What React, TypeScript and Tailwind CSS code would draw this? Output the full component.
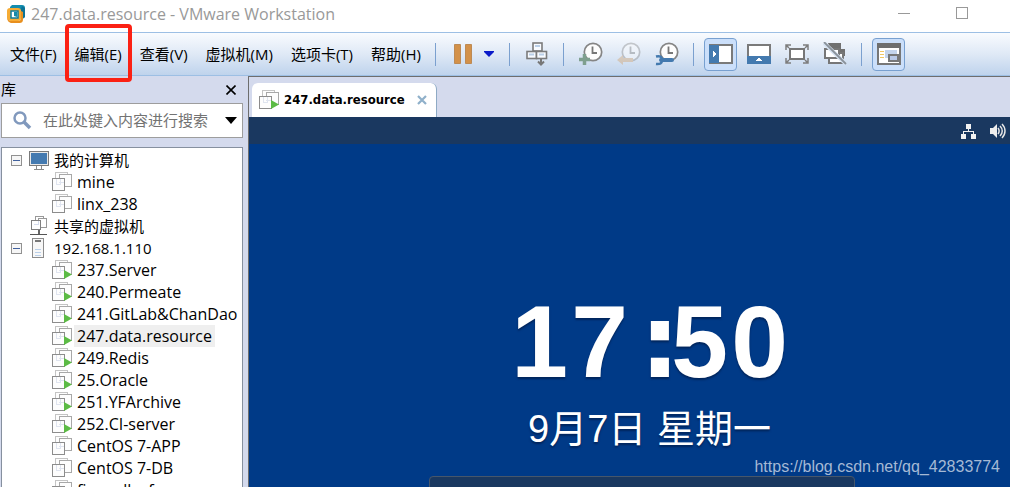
import type { ReactNode } from "react";

const uiFont = "font-['Open_Sans','Noto_Sans_CJK_SC',sans-serif]";

function VmIcon({ running = false }: { running?: boolean }) {
  return (
    <svg width="20" height="20" viewBox="0 0 20 20" shapeRendering="crispEdges" aria-hidden="true" className="shrink-0">
      <rect x="3.5" y="0.5" width="12" height="12" fill="#fdfdfd" stroke="#c4c4c4" />
      <rect x="7.5" y="2.5" width="12" height="12" fill="#fdfdfd" stroke="#a8a8a8" />
      <rect x="0.5" y="6.5" width="12" height="12" fill="#fdfdfd" stroke="#8c8c8c" />
      <path d="M4.5 7v5h4M8.5 7v5M7 10.500h5" fill="none" stroke="#dfe4ef" />
      {running && <path d="M12 10v9l8-4.5z" fill="#5cbb45" shapeRendering="auto" />}
    </svg>
  );
}

function ComputerIcon() {
  return (
    <svg width="20" height="20" viewBox="0 0 20 20" shapeRendering="crispEdges" aria-hidden="true">
      <rect x="0.5" y="1.5" width="19" height="14" fill="#e8e8e8" stroke="#7b7b7b" />
      <rect x="2" y="3" width="16" height="11" fill="#447ab0" />
      <path d="M7.5 16v3M12.5 16v3M5 19.5h10" stroke="#8a8a8a" fill="none" />
    </svg>
  );
}

function SharedIcon() {
  return (
    <svg width="20" height="20" viewBox="0 0 20 20" shapeRendering="crispEdges" aria-hidden="true">
      <rect x="6.5" y="0.5" width="8" height="8" fill="#fff" stroke="#999" />
      <rect x="9.5" y="2.5" width="8" height="9" fill="#fff" stroke="#999" />
      <rect x="2.5" y="4.5" width="9" height="9" fill="#fff" stroke="#808080" />
      <path d="M5 8.5h4V5" stroke="#d5dced" fill="none" />
      <path d="M10 14v4" stroke="#666" fill="none" strokeWidth="2" />
      <path d="M1 18.500h17" stroke="#555" fill="none" />
    </svg>
  );
}

function ServerIcon() {
  return (
    <svg width="20" height="20" viewBox="0 0 20 20" shapeRendering="crispEdges" aria-hidden="true">
      <rect x="3.5" y="0.5" width="11" height="19" fill="#f7f7f7" stroke="#8b8b8b" />
      <path d="M6 3h6" stroke="#777" strokeWidth="2" />
      <path d="M6 11.5h6M6 14.5h6M6 17.5h6" stroke="#b9cfe9" />
    </svg>
  );
}

function LogoIcon() {
  return (
    <svg width="20" height="20" viewBox="0 0 20 20" aria-hidden="true">
      <path d="M6 1h10a3 3 0 013 3v9l-4 3V6H4V3z" fill="#138daf" />
      <path d="M16 2l3 2v9l-4 3V5z" fill="#0d7396" />
      <path d="M4 4h8a3 3 0 013 3v7a3 3 0 01-3 3H5a4 4 0 01-4-4V7a3 3 0 013-3z" fill="#f6ac35" />
      <path d="M1 12c0 5 2 7 5 7h7c3 0 4-1 4-4V8l-2-1v7a3 3 0 01-3 3H5c-2 0-4-2-4-5z" fill="#e88f1e" />
      <rect x="5" y="7" width="7" height="7" fill="#fff" stroke="#0c7c9e" strokeWidth="1.500" />
      <path d="M8 8h3v5l-3-1z" fill="#1589a8" />
    </svg>
  );
}

function ClockFace({ faded = false, children }: { faded?: boolean; children: ReactNode }) {
  return (
    <svg width="24" height="24" viewBox="0 0 24 24" aria-hidden="true" opacity={faded ? 0.4 : 1}>
      <circle cx="14" cy="10" r="8.700" fill="#fdfdfd" stroke="#858585" strokeWidth="1.700" />
      <path d="M13.500 4.500v6.500h4.500" fill="none" stroke="#777" strokeWidth="1.800" />
      {children}
    </svg>
  );
}

function SendIcon() {
  return (
    <svg width="22" height="24" viewBox="0 0 22 24" aria-hidden="true">
      <g fill="#f8fbff" stroke="#7b7b7b" strokeWidth="1.600">
        <rect x="7" y="1" width="9" height="8" />
        <rect x="1" y="9.500" width="9.500" height="7" />
        <rect x="10.500" y="9.500" width="10" height="7" />
      </g>
      <path d="M9 4h5M3 12.500h5M13 12.500h5" stroke="#b9cfe8" strokeWidth="2" />
      <path d="M15 17v5M12 19.500l3 3 3-3" fill="none" stroke="#777" strokeWidth="2" />
    </svg>
  );
}

function SidebarViewIcon() {
  return (
    <svg width="24" height="20" viewBox="0 0 24 20" shapeRendering="crispEdges" aria-hidden="true">
      <rect x="1" y="1" width="22" height="18" fill="#fff" stroke="#7a7a7a" strokeWidth="2" />
      <rect x="0" y="1" width="10" height="18" fill="#447aaf" />
      <path d="M4 6v8l3-4z" fill="#fff" />
    </svg>
  );
}

function ThumbnailViewIcon() {
  return (
    <svg width="24" height="20" viewBox="0 0 24 20" shapeRendering="crispEdges" aria-hidden="true">
      <rect x="1" y="1" width="22" height="18" fill="#fff" stroke="#7a7a7a" strokeWidth="2" />
      <rect x="0" y="12" width="24" height="8" fill="#447aaf" />
      <path d="M8 17h8l-4-3z" fill="#fff" />
    </svg>
  );
}

function FullScreenIcon() {
  return (
    <svg width="24" height="20" viewBox="0 0 24 20" aria-hidden="true">
      <rect x="5" y="5" width="14" height="10" fill="#fff" stroke="#777" strokeWidth="2" />
      <path d="M1 6V1h5M18 1h5v5M23 14v5h-5M6 19H1v-5M1 1l3 3M23 1l-3 3M23 19l-3-3M1 19l3-3" fill="none" stroke="#7d7d7d" strokeWidth="1.500" />
    </svg>
  );
}

function UnityIcon() {
  return (
    <svg width="24" height="24" viewBox="0 0 24 24" aria-hidden="true">
      <path d="M5 1h13v6h4v7H9z" fill="#707070" />
      <rect x="6" y="11" width="14" height="10" fill="#fff" stroke="#777" strokeWidth="2" />
      <rect x="2" y="7" width="14" height="9" fill="#fff" stroke="#777" strokeWidth="2" />
      <path d="M1 1l22 21" stroke="#d6e2f2" strokeWidth="4" />
      <path d="M1 0l22 22" stroke="#8a929a" strokeWidth="1.800" />
    </svg>
  );
}

function ConsoleIcon() {
  return (
    <svg width="24" height="22" viewBox="0 0 24 22" shapeRendering="crispEdges" aria-hidden="true">
      <rect x="1" y="1" width="22" height="20" fill="#fff" stroke="#777" strokeWidth="2" />
      <path d="M0 0h24v5H0z" fill="#6e6e6e" />
      <path d="M3 8.500h4M3 11.500h4M3 14.500h4" stroke="#f1c765" />
      <rect x="8" y="7" width="12" height="8" fill="#c4d4ec" />
      <rect x="12" y="12" width="9" height="6" fill="#b9c9e7" stroke="#777" strokeWidth="2" />
    </svg>
  );
}

function ToolButton({ label, active = false, children }: { label: string; active?: boolean; children: ReactNode }) {
  const look = active ? "border-[#78a0d0] bg-[#cbdffa]" : "border-transparent";
  return (
    <button type="button" aria-label={label} className={`flex h-[33px] w-[33px] shrink-0 items-center justify-center rounded border ${look}`}>
      {children}
    </button>
  );
}

function ToolGroup({ children }: { children: ReactNode }) {
  return <div className="flex h-[23px] shrink-0 items-center gap-[5px] border-l border-[#7ba0cf] px-[10px]">{children}</div>;
}

const menus = ["文件(F)", "编辑(E)", "查看(V)", "虚拟机(M)", "选项卡(T)", "帮助(H)"];

function Menu() {
  return (
    <nav className="flex w-[435px] shrink-0 pl-px">
      {menus.map((name) => (
        <button key={name} type="button" className="relative shrink-0 px-[9px] text-[15px] leading-6 text-black">
          {name}
          {name === "编辑(E)" && <span className="absolute -inset-x-px -top-[18px] -bottom-[16px] rounded border-4 border-[#fb2114]" />}
        </button>
      ))}
    </nav>
  );
}

function Toolbar() {
  return (
    <div className="flex h-[44px] shrink-0 items-center border-y border-[#9dbfe4] bg-linear-to-b from-[#f9fbfe] via-[#dfe9f6] to-[#bfd3ec]">
      <Menu />
      <div className="flex items-center">
        <div className="flex h-[23px] shrink-0 items-center border-l border-[#7ba0cf] px-[10px]">
          <ToolButton label="挂起">
            <svg width="18" height="20" viewBox="0 0 18 20" aria-hidden="true">
              <path d="M.5.5h6v19h-6zM11.500.5h6v19h-6z" fill="#d39149" stroke="#bd8a54" />
            </svg>
          </ToolButton>
          <button type="button" aria-label="电源选项" className="flex h-[33px] w-5 items-center justify-center">
            <svg width="10" height="6" viewBox="0 0 10 6" aria-hidden="true">
              <path d="M0 0h10v1L5 6 0 1z" fill="#0b1bc9" />
            </svg>
          </button>
        </div>
        <ToolGroup>
          <ToolButton label="发送"><SendIcon /></ToolButton>
        </ToolGroup>
        <ToolGroup>
          <ToolButton label="拍摄快照">
            <ClockFace><path d="M5.500 12v11M0 17.500h11" stroke="#7fa08f" strokeWidth="3.500" /></ClockFace>
          </ToolButton>
          <ToolButton label="恢复快照">
            <ClockFace faded><path d="M0 18l6-5v3h10v4H6v3z" fill="#d2a069" /></ClockFace>
          </ToolButton>
          <ToolButton label="管理快照">
            <ClockFace>
              <path d="M6 18h11" stroke="#447aaf" strokeWidth="4" strokeLinecap="round" />
              <path d="M1 14.500c4-1 6 0 6 3.500s-2 4.500-6 4" fill="none" stroke="#447aaf" strokeWidth="2.500" />
            </ClockFace>
          </ToolButton>
        </ToolGroup>
        <ToolGroup>
          <ToolButton label="显示库" active><SidebarViewIcon /></ToolButton>
          <ToolButton label="显示缩略图"><ThumbnailViewIcon /></ToolButton>
          <ToolButton label="全屏"><FullScreenIcon /></ToolButton>
          <ToolButton label="Unity"><UnityIcon /></ToolButton>
        </ToolGroup>
        <ToolGroup>
          <ToolButton label="控制台视图" active><ConsoleIcon /></ToolButton>
        </ToolGroup>
      </div>
    </div>
  );
}

type Machine = { name: string; running?: boolean; selected?: boolean };

const localMachines: Machine[] = [{ name: "mine" }, { name: "linx_238" }];

const serverMachines: Machine[] = [
  { name: "237.Server", running: true },
  { name: "240.Permeate", running: true },
  { name: "241.GitLab&ChanDao", running: true },
  { name: "247.data.resource", running: true, selected: true },
  { name: "249.Redis", running: true },
  { name: "25.Oracle", running: true },
  { name: "251.YFArchive", running: true },
  { name: "252.CI-server", running: true },
  { name: "CentOS 7-APP" },
  { name: "CentOS 7-DB" },
  { name: "firewall_ufw" },
];

function MachineList({ machines }: { machines: Machine[] }) {
  return (
    <ul className="text-base leading-[22px]">
      {machines.map((m) => (
        <li key={m.name} className="flex h-[22px] items-center gap-0.5 pl-[50px]">
          <VmIcon running={m.running} />
          <span className={m.selected ? "bg-[#efefef] px-[3px]" : "px-[3px]"}>{m.name}</span>
        </li>
      ))}
    </ul>
  );
}

function BranchRow({ icon, label, toggle = true }: { icon: ReactNode; label: string; toggle?: boolean }) {
  return (
    <div className="flex h-[22px] items-center pl-[9px]">
      <span className="flex w-[18px] shrink-0">
        {toggle && (
          <button type="button" aria-label={`折叠 ${label}`} className="flex h-[11px] w-[11px] items-center justify-center border border-[#919191] bg-[#f6f6f6]">
            <span className="h-px w-[7px] bg-[#41619e]" />
          </button>
        )}
      </span>
      {icon}
      <span className="pl-[5px]">{label}</span>
    </div>
  );
}

function Library() {
  return (
    <aside className="flex w-[248px] shrink-0 flex-col pr-[5px] pl-px">
      <div className="flex h-[27px] shrink-0 items-center justify-between pr-[7px] text-[15px]">
        <h2>库</h2>
        <button type="button" aria-label="关闭库">
          <svg width="10" height="10" viewBox="0 0 10 10" aria-hidden="true">
            <path d="M.5.5l9 9M9.500.5l-9 9" stroke="#000" strokeWidth="1.600" />
          </svg>
        </button>
      </div>
      <div className="flex h-[35px] shrink-0 items-center border border-[#9d9d9d] bg-white pr-[5px] pl-[11px]">
        <svg width="19" height="19" viewBox="0 0 19 19" aria-hidden="true" className="shrink-0">
          <circle cx="7" cy="7" r="5.500" fill="none" stroke="#8199bd" strokeWidth="2.500" />
          <path d="M11 11l6 6" stroke="#8199bd" strokeWidth="3.500" />
        </svg>
        <input aria-label="搜索" placeholder="在此处键入内容进行搜索" className="ml-[11px] w-full min-w-0 bg-transparent text-[15px] text-black outline-none placeholder:text-[#737373]" />
        <button type="button" aria-label="搜索选项" className="shrink-0">
          <svg width="12" height="7" viewBox="0 0 12 7" aria-hidden="true">
            <path d="M0 0h12L6 7z" fill="#000" />
          </svg>
        </button>
      </div>
      <div className="mt-[9px] min-h-0 grow overflow-hidden border border-b-0 border-[#86909f] bg-white pt-px text-[15px] leading-[22px] whitespace-nowrap text-black">
        <BranchRow icon={<ComputerIcon />} label="我的计算机" />
        <MachineList machines={localMachines} />
        <BranchRow icon={<SharedIcon />} label="共享的虚拟机" toggle={false} />
        <BranchRow icon={<ServerIcon />} label="192.168.1.110" />
        <MachineList machines={serverMachines} />
      </div>
    </aside>
  );
}

function GuestScreen() {
  return (
    <div className="relative flex min-h-0 grow flex-col overflow-hidden bg-[#003a87]">
      <div className="flex h-[27px] shrink-0 items-center justify-end gap-3 bg-[#1a3860] pr-1">
        <svg width="16" height="16" viewBox="0 0 16 16" shapeRendering="crispEdges" aria-hidden="true">
          <path d="M5 1h5v5H5zM0 11h5v5H0zM10 11h5v5h-5z" fill="#f2f2f2" />
          <path d="M7.500 6v3M2.500 11V8.500h10V11" fill="none" stroke="#f2f2f2" />
        </svg>
        <svg width="17" height="16" viewBox="0 0 17 16" aria-hidden="true">
          <path d="M1 5h3l4-4v14l-4-4H1z" fill="#eee" />
          <path d="M9 5c1.500 2 1.500 4 0 6M11 3c3 3 3 7 0 10M13 1c4 4 4 10 0 14" fill="none" stroke="#e5e5e5" strokeWidth="1.500" />
        </svg>
      </div>
      <div className="flex grow flex-col items-center pt-[142px] pl-10 font-['Liberation_Sans','Noto_Sans_CJK_SC',sans-serif] text-white text-shadow-[0_2px_2px_#00255c]">
        <time className="flex h-[112px] items-baseline text-[102px] leading-[112px] font-bold">
          <span className="w-[60px] text-center">1</span>
          <span className="w-[60px] text-center">7</span>
          <span className="w-10 pl-[10px] font-['DejaVu_Sans',sans-serif]">:</span>
          <span className="w-[60px] text-center">5</span>
          <span className="w-[60px] text-center">0</span>
        </time>
        <p className="mt-1 text-[38px] leading-[54px]">9月7日 星期一</p>
      </div>
      <div className="absolute -bottom-1 left-[180px] h-[15px] w-[426px] rounded border border-[#46566b] bg-[#1a3860]" />
      <p className="absolute right-[10px] bottom-2 font-['Liberation_Sans',sans-serif] text-base leading-6 text-[#a5b9d5]">https://blog.csdn.net/qq_42833774</p>
    </div>
  );
}

export default function App() {
  return (
    <div className={`flex h-screen flex-col overflow-hidden bg-[#d4daed] ${uiFont}`}>
      <header className="flex h-8 shrink-0 items-start bg-white pr-[19px] pl-1.5">
        <div className="flex h-[27px] grow items-center gap-[5px]">
          <LogoIcon />
          <h1 className="text-base text-[#999]">247.data.resource - VMware Workstation</h1>
        </div>
        <button type="button" aria-label="最小化" className="flex h-[26px] w-[58px] items-center justify-center">
          <span className="h-px w-3 bg-[#999]" />
        </button>
        <button type="button" aria-label="最大化" className="flex h-[26px] w-[58px] items-center justify-center">
          <span className="h-3 w-3 border border-[#999]" />
        </button>
      </header>
      <Toolbar />
      <div className="flex min-h-0 grow">
        <Library />
        <main className="flex min-w-0 grow flex-col border-t border-l border-[#6e6e6e]">
          <div className="flex h-10 shrink-0 items-end pl-[3px]">
            <div className="flex h-[34px] items-center rounded-t-md border-r border-[#8eaac5] bg-white pr-[9px] pl-[7px]">
              <VmIcon running />
              <span className="pl-[5px] font-['DejaVu_Sans_Condensed','Noto_Sans',sans-serif] text-[13px] font-bold text-black">247.data.resource</span>
              <button type="button" aria-label="关闭标签" className="ml-3">
                <svg width="10" height="10" viewBox="0 0 10 10" aria-hidden="true">
                  <path d="M1 1l8 8M9 1L1 9" stroke="#8fb0ca" strokeWidth="2.200" />
                </svg>
              </button>
            </div>
          </div>
          <GuestScreen />
        </main>
      </div>
    </div>
  );
}
